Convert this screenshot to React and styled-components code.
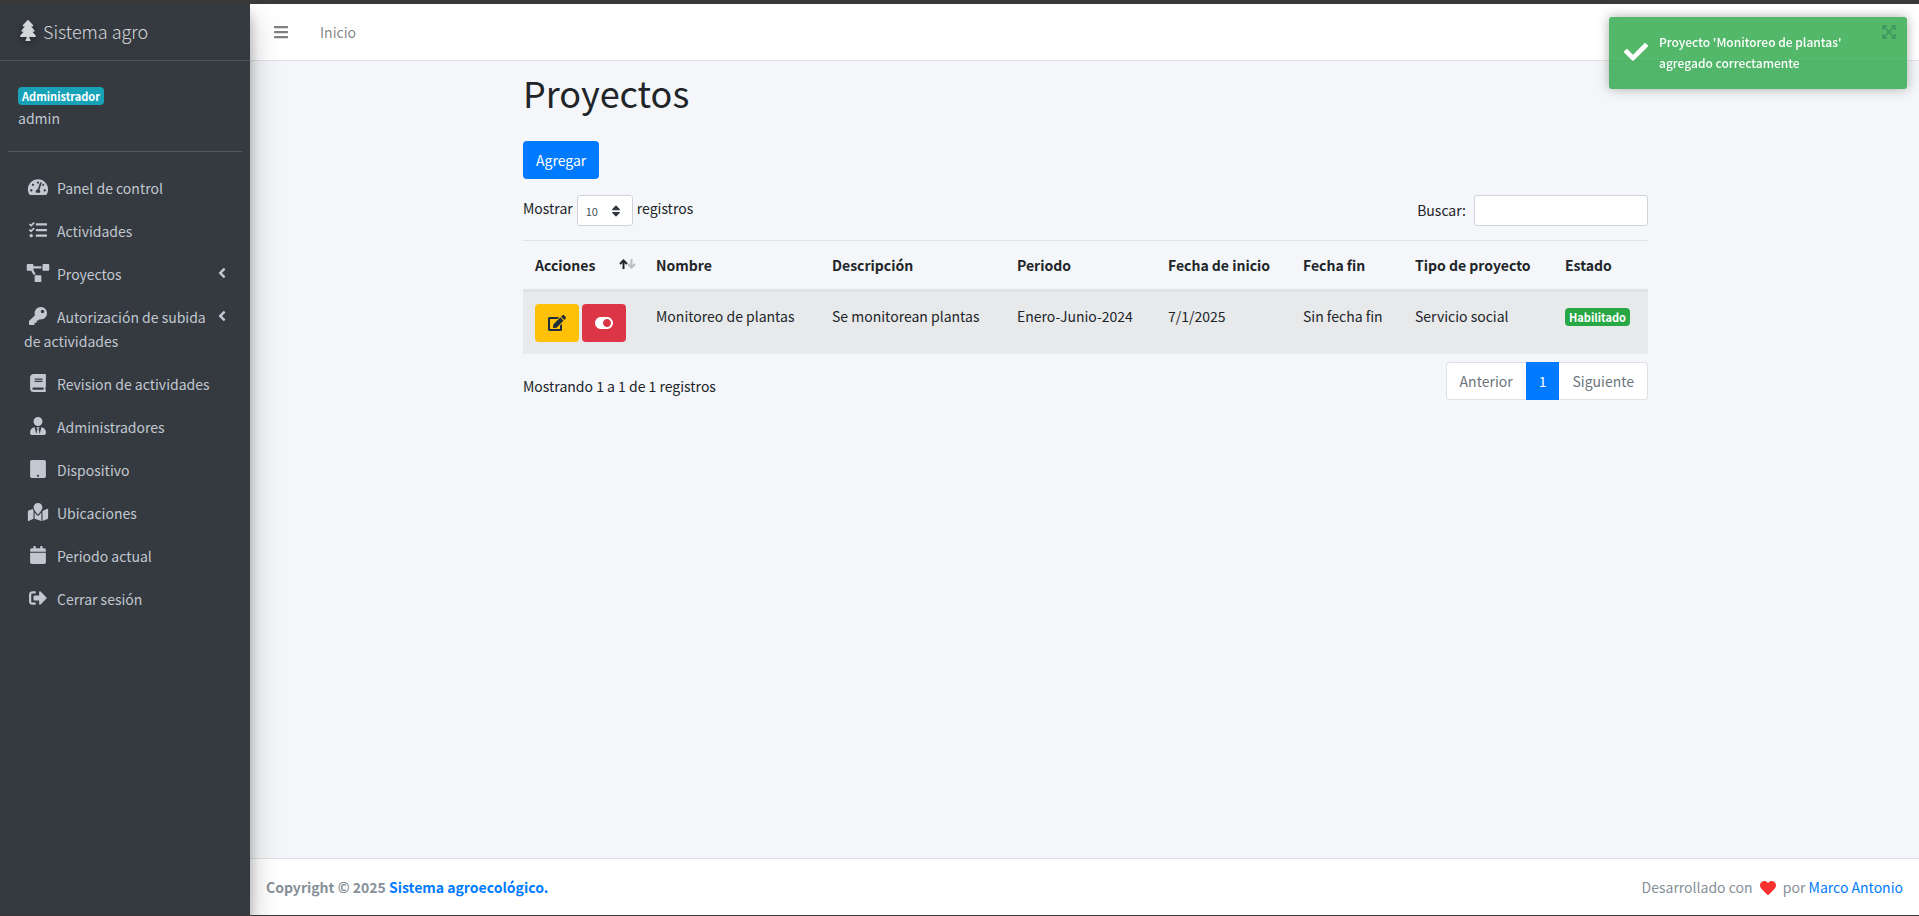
import React from "react";
import styled, { createGlobalStyle } from "styled-components";
import {
  FaTree,
  FaTachometerAlt,
  FaTasks,
  FaProjectDiagram,
  FaKey,
  FaBook,
  FaUserTie,
  FaTablet,
  FaMapMarked,
  FaCalendar,
  FaSignOutAlt,
  FaAngleLeft,
  FaBars,
  FaEdit,
  FaToggleOn,
  FaCheck,
  FaHeart,
  FaExpandArrowsAlt,
  FaSort,
} from "react-icons/fa";

const menu = [
  { label: "Panel de control", icon: FaTachometerAlt },
  { label: "Actividades", icon: FaTasks },
  { label: "Proyectos", icon: FaProjectDiagram, tree: true },
  { label: "Autorización de subida de actividades", icon: FaKey, tree: true },
  { label: "Revision de actividades", icon: FaBook },
  { label: "Administradores", icon: FaUserTie },
  { label: "Dispositivo", icon: FaTablet },
  { label: "Ubicaciones", icon: FaMapMarked },
  { label: "Periodo actual", icon: FaCalendar },
  { label: "Cerrar sesión", icon: FaSignOutAlt },
];

const columns = [
  { title: "Acciones", width: 121, sorted: true },
  { title: "Nombre", width: 176 },
  { title: "Descripción", width: 185 },
  { title: "Periodo", width: 151 },
  { title: "Fecha de inicio", width: 135 },
  { title: "Fecha fin", width: 112 },
  { title: "Tipo de proyecto", width: 150 },
  { title: "Estado", width: 95 },
];

const projects = [
  {
    name: "Monitoreo de plantas",
    description: "Se monitorean plantas",
    period: "Enero-Junio-2024",
    start: "7/1/2025",
    end: "Sin fecha fin",
    type: "Servicio social",
    status: "Habilitado",
  },
];

export default function App() {
  return (
    <Page>
      <GlobalStyle />
      <Wrapper>
        <Sidebar />
        <Main>
          <Navbar>
            <MenuToggle type="button" aria-label="Menú">
              <FaBars />
            </MenuToggle>
            <NavItem href="#">Inicio</NavItem>
          </Navbar>
          <Content>
            <Container>
              <Title>Proyectos</Title>
              <Button type="button">Agregar</Button>
              <Controls />
              <ProjectTable />
              <Pager />
            </Container>
          </Content>
          <Footer>
            <strong>
              Copyright © 2025 <a href="#">Sistema agroecológico.</a>
            </strong>
            <Credits>
              Desarrollado con <FaHeart aria-label="amor" /> por{" "}
              <a href="#">Marco Antonio</a>
            </Credits>
          </Footer>
        </Main>
      </Wrapper>
      <Toast role="status">
        <FaCheck />
        <p>Proyecto 'Monitoreo de plantas' agregado correctamente</p>
        <ToastClose type="button" aria-label="Cerrar">
          <FaExpandArrowsAlt />
        </ToastClose>
      </Toast>
    </Page>
  );
}

function Sidebar() {
  return (
    <Aside>
      <Brand href="#">
        <FaTree />
        <span>Sistema agro</span>
      </Brand>
      <UserPanel>
        <Badge background="#17a2b8">Administrador</Badge>
        <span>admin</span>
      </UserPanel>
      <Menu>
        {menu.map(({ label, icon: Icon, tree }) => (
          <li key={label}>
            <MenuLink href="#">
              <span>
                <MenuIcon>
                  <Icon />
                </MenuIcon>
                {label}
              </span>
              {tree && <FaAngleLeft />}
            </MenuLink>
          </li>
        ))}
      </Menu>
    </Aside>
  );
}

function Controls() {
  return (
    <ControlsRow>
      <LengthLabel>
        Mostrar
        <SelectBox>
          <select defaultValue="10">
            <option>10</option>
            <option>25</option>
            <option>50</option>
            <option>100</option>
          </select>
          <FaSort />
        </SelectBox>
        registros
      </LengthLabel>
      <SearchLabel>
        Buscar:
        <input type="search" />
      </SearchLabel>
    </ControlsRow>
  );
}

function SortIcon() {
  return (
    <SortArrows viewBox="0 0 17 10" aria-hidden="true">
      <path d="M4.5 10V1.5M1 5l3.5-3.5L8 5" stroke="#212529" />
      <path d="M12.5 0v8.5M9 5l3.5 3.5L16 5" stroke="#b9bcbf" />
    </SortArrows>
  );
}

function ProjectTable() {
  return (
    <Table>
      <colgroup>
        {columns.map(({ title, width }) => (
          <col key={title} width={width} />
        ))}
      </colgroup>
      <thead>
        <tr>
          {columns.map(({ title, sorted }) => (
            <th key={title} scope="col">
              <HeadCell>
                {title}
                {sorted && <SortIcon />}
              </HeadCell>
            </th>
          ))}
        </tr>
      </thead>
      <tbody>
        {projects.map((project) => (
          <tr key={project.name}>
            <td>
              <Actions>
                <Button type="button" variant="warning" aria-label="Editar">
                  <FaEdit />
                </Button>
                <Button type="button" variant="danger" aria-label="Deshabilitar">
                  <FaToggleOn />
                </Button>
              </Actions>
            </td>
            <td>{project.name}</td>
            <td>{project.description}</td>
            <td>{project.period}</td>
            <td>{project.start}</td>
            <td>{project.end}</td>
            <td>{project.type}</td>
            <td>
              <Badge background="#28a745">{project.status}</Badge>
            </td>
          </tr>
        ))}
      </tbody>
    </Table>
  );
}

function Pager() {
  return (
    <PagerRow>
      <Info>Mostrando 1 a 1 de 1 registros</Info>
      <Pagination aria-label="Paginación">
        <PageLink href="#">Anterior</PageLink>
        <PageLink href="#" $active>
          1
        </PageLink>
        <PageLink href="#">Siguiente</PageLink>
      </Pagination>
    </PagerRow>
  );
}

const GlobalStyle = createGlobalStyle`
  *,
  *::before,
  *::after {
    box-sizing: border-box;
  }

  body {
    margin: 0;
    color: #212529;
    font: 14px/24px "Noto Sans CJK SC", "Noto Sans", sans-serif;
  }

  button,
  input,
  select {
    font: inherit;
  }

  a {
    color: #007bff;
    text-decoration: none;
  }
`;

const Page = styled.div`
  display: flex;
  flex-direction: column;
  min-height: 100vh;
  border-top: 4px solid #3b3938;
  border-bottom: 1px solid #3b3335;
`;

const Wrapper = styled.div`
  display: flex;
  flex: 1;
`;

const Aside = styled.aside`
  flex: none;
  width: 250px;
  z-index: 1;
  background: #343a40;
  color: #c2c7d0;
  box-shadow: 0 14px 28px rgba(0, 0, 0, 0.25), 0 10px 10px rgba(0, 0, 0, 0.22);
  clip-path: inset(0 -60px 0 0);
`;

const Brand = styled.a`
  display: flex;
  align-items: center;
  gap: 7px;
  height: 57px;
  padding: 0 20px 2px;
  border-bottom: 1px solid #4b545c;
  color: rgba(255, 255, 255, 0.8);
  font-size: 18px;
  font-weight: 300;

  svg {
    width: 16px;
    height: 21px;
    margin-bottom: 2px;
    filter: drop-shadow(0 3px 4px rgba(0, 0, 0, 0.4));
  }
`;

const UserPanel = styled.div`
  display: flex;
  flex-direction: column;
  align-items: flex-start;
  gap: 1px;
  margin: 0 8px;
  padding: 26px 10px 21px;
  border-bottom: 1px solid #4f5962;
`;

const Badge = styled.span`
  display: inline-block;
  padding: 3px 4px;
  border-radius: 4px;
  background: ${(props) => props.background};
  color: #fff;
  font-size: 11px;
  font-weight: 700;
  line-height: 12px;
`;

const Menu = styled.ul`
  display: flex;
  flex-direction: column;
  gap: 3px;
  margin: 16px 0 0;
  padding: 0 8px;
  list-style: none;
`;

const MenuLink = styled.a`
  display: flex;
  justify-content: space-between;
  padding: 8px 12px 8px 16px;
  color: inherit;

  > svg {
    flex: none;
    width: 16px;
    height: 16px;
    margin-top: 3px;
  }
`;

const MenuIcon = styled.span`
  display: inline-flex;
  justify-content: center;
  width: 28px;
  margin-right: 5px;
  vertical-align: -2px;

  svg {
    flex: none;
    width: 24px;
    height: 18px;
  }
`;

const Main = styled.div`
  display: flex;
  flex: 1;
  flex-direction: column;
  min-width: 0;
`;

const Navbar = styled.nav`
  display: flex;
  align-items: center;
  gap: 31px;
  height: 57px;
  padding: 0 23px;
  border-bottom: 1px solid #dee2e6;
  background: #fff;
`;

const MenuToggle = styled.button`
  display: flex;
  padding: 0;
  border: 0;
  background: none;
  color: rgba(0, 0, 0, 0.5);
  font-size: 16px;
`;

const NavItem = styled.a`
  color: rgba(0, 0, 0, 0.5);
`;

const Content = styled.main`
  flex: 1;
  background: #f4f6f9;
`;

const Container = styled.div`
  max-width: 1141px;
  margin: 0 auto;
  padding: 8px 7px 8px 9px;
`;

const Title = styled.h1`
  margin: 0 0 26px;
  font-size: 36px;
  font-weight: 400;
  line-height: 46px;
`;

const variants = {
  primary: { background: "#007bff", color: "#fff" },
  warning: { background: "#ffc107", color: "#1f2d3d" },
  danger: { background: "#dc3545", color: "#fff" },
};

const Button = styled.button`
  height: 38px;
  padding: 0 13px;
  border: 0;
  border-radius: 4px;
  background: ${({ variant = "primary" }) => variants[variant].background};
  color: ${({ variant = "primary" }) => variants[variant].color};

  svg {
    display: block;
    width: 18px;
    height: 16px;
  }
`;

const ControlsRow = styled.div`
  display: flex;
  justify-content: space-between;
  margin: 16px 0 14px;

  input,
  select {
    height: 31px;
    border: 1px solid #ced4da;
    border-radius: 3px;
    background: #fff;
  }
`;

const LengthLabel = styled.label`
  display: flex;
  gap: 4px;
  line-height: 26px;
`;

const SelectBox = styled.span`
  position: relative;
  display: flex;

  select {
    width: 56px;
    padding: 0 8px;
    appearance: none;
    color: #495057;
    font-size: 11px;
  }

  svg {
    position: absolute;
    top: 9px;
    right: 10px;
    width: 14px;
    height: 14px;
    color: #343a40;
    pointer-events: none;
  }
`;

const SearchLabel = styled.label`
  display: flex;
  gap: 8px;
  line-height: 30px;

  input {
    width: 174px;
    padding: 4px 8px;
  }
`;

const Table = styled.table`
  width: 100%;
  table-layout: fixed;
  border-spacing: 0;

  th,
  td {
    padding: 12px;
    border-top: 1px solid #dee2e6;
    text-align: left;
    vertical-align: top;
    white-space: nowrap;
  }

  th {
    padding-right: 8px;
    border-bottom: 2px solid #dee2e6;
  }

  td {
    padding-right: 0;
    background: #e7e9eb;
  }
`;

const HeadCell = styled.div`
  display: flex;
  justify-content: space-between;
`;

const SortArrows = styled.svg`
  width: 17px;
  height: 10px;
  margin-top: 6px;
  fill: none;
  stroke-width: 2;
`;

const Actions = styled.div`
  display: flex;
  gap: 3px;
`;

const PagerRow = styled.div`
  display: flex;
  justify-content: space-between;
  margin-top: 8px;
`;

const Info = styled.div`
  padding-top: 12px;
`;

const Pagination = styled.nav`
  display: flex;
`;

const PageLink = styled.a`
  height: 38px;
  padding: 6px ${(props) => (props.$active ? "12px" : "13px")};
  border: 1px solid ${(props) => (props.$active ? "#007bff" : "#dee2e6")};
  background: ${(props) => (props.$active ? "#007bff" : "#fff")};
  color: ${(props) => (props.$active ? "#fff" : "#6c757d")};

  &:first-child {
    border-right: 0;
    border-radius: 4px 0 0 4px;
  }

  &:last-child {
    border-left: 0;
    border-radius: 0 4px 4px 0;
  }
`;

const Footer = styled.footer`
  display: flex;
  justify-content: space-between;
  padding: 16px;
  border-top: 1px solid #dee2e6;
  background: #fff;
  color: #869099;
`;

const Credits = styled.span`
  svg {
    margin: 0 4px;
    color: #f8312f;
    font-size: 16px;
    vertical-align: -3px;
  }
`;

const Toast = styled.div`
  position: fixed;
  top: 17px;
  right: 12px;
  z-index: 2;
  display: flex;
  align-items: center;
  gap: 11px;
  width: 298px;
  padding: 14px 15px 16px;
  border-radius: 3px;
  background: #28a745;
  color: #fff;
  font-size: 12px;
  font-weight: 500;
  line-height: 21px;
  opacity: 0.8;
  box-shadow: 0 0 12px #999;

  > svg {
    flex: none;
    width: 24px;
    height: 24px;
  }

  p {
    width: 200px;
    margin: 0;
  }
`;

const ToastClose = styled.button`
  position: absolute;
  top: 7px;
  right: 10px;
  display: flex;
  padding: 0;
  border: 0;
  background: none;
  color: #128037;
  font-size: 16px;
`;
